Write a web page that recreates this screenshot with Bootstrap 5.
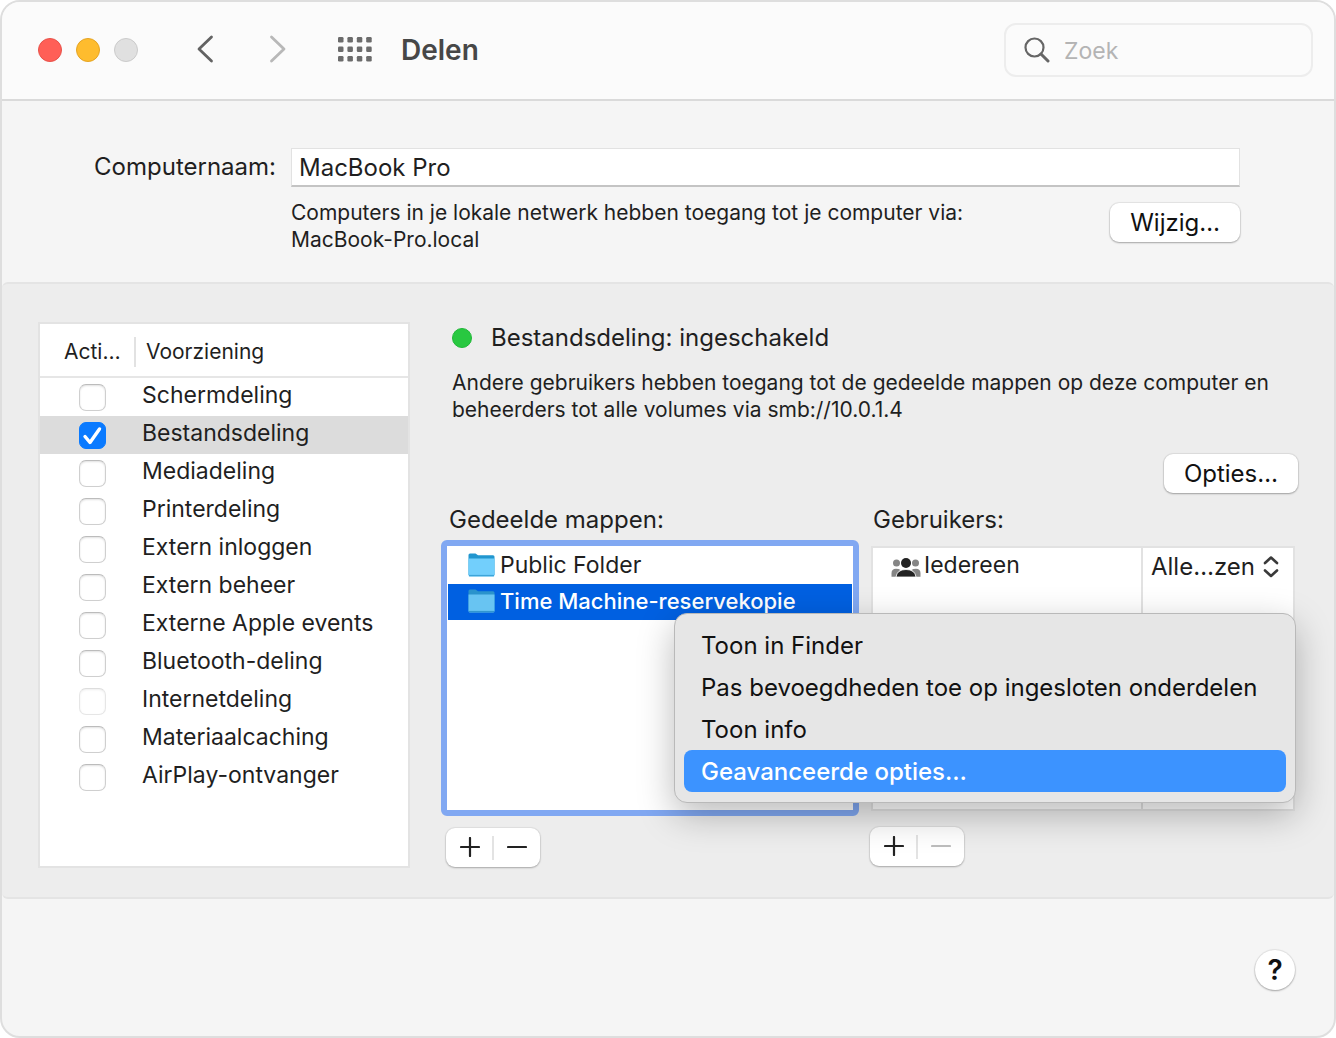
<!DOCTYPE html>
<html lang="nl">
<head>
<meta charset="utf-8">
<meta name="viewport" content="width=device-width, initial-scale=1">
<title>Delen</title>
<link href="https://cdn.jsdelivr.net/npm/bootstrap@5.3.0/dist/css/bootstrap.min.css" rel="stylesheet">
<style>
  body { font-family: Inter, "Liberation Sans", sans-serif; font-size: 24px; line-height: 30px; color: #1f1f1f; background: #fff; }
  svg { display: block; flex: none; }
  .window { min-height: 100vh; border: 2px solid #dedede; border-radius: 20px; background: #f5f5f5; overflow: hidden; }

  .titlebar { background: #fbfbfb; border-bottom: 2px solid #dadada; padding: 21px 21px 22px 36px; }
  .lights { gap: 14px; }
  .light { width: 24px; height: 24px; border-radius: 50%; border: 1px solid; padding: 0; }
  .light-close { background: #ff5f57; border-color: #e8524a; }
  .light-min { background: #febc2e; border-color: #e5a423; }
  .light-max { background: #e0e0e0; border-color: #cbcbcb; }
  .tool { border: 0; background: none; padding: 0; }
  .title { font-size: 28px; line-height: 36px; font-weight: 600; color: #474747; margin: 0 0 0 29px; }
  .search { width: 309px; height: 54px; border: 2px solid #ededed; border-radius: 12px; padding: 0 18px; background: #fbfbfb; gap: 14px; }
  .search input { border: 0; background: none; min-width: 0; outline: 0; padding: 2px 0 0; font-size: 23px; }
  .search input::placeholder { color: #b4b4b4; opacity: 1; }

  .name-section { padding: 47px 94px 29px 0; }
  .name-label { width: 274px; flex: none; text-align: right; padding-top: 4px; }
  .name-input { width: 100%; height: 39px; border: 1px solid #e2e2e2; border-bottom: 2px solid #c4c4c4; background: #fff; padding: 0 7px; color: inherit; }
  .name-field { margin-left: 15px; }
  .note { font-size: 21px; line-height: 27px; margin: 0; }
  .push { border: 0; border-radius: 9px; background: #fff; height: 39px; padding: 0 20px; color: #111; line-height: 36px; box-shadow: 0 0 1px 1px rgba(0,0,0,.07), 0 1px 2px rgba(0,0,0,.28); }

  .share-section { background: #ededed; border: solid #e4e4e4; border-width: 2px 0; border-radius: 6px; padding: 38px 36px 29px; }
  .services { width: 372px; height: 546px; flex: none; border: 2px solid #e3e3e3; background: #fff; }
  .services table { width: 100%; border-collapse: separate; border-spacing: 0; font-size: 23px; }
  .services th { height: 54px; font-weight: 400; font-size: 21px; padding: 4px 0 0; border-bottom: 2px solid #e6e6e6; }
  .services th span { display: block; line-height: 30px; }
  .col-on { width: 96px; }
  .col-on span { padding-left: 24px; border-right: 2px solid #e2e2e2; }
  .services th + th span { padding-left: 10px; }
  .services td { height: 38px; padding: 0; line-height: 35px; vertical-align: top; }
  .services td:last-child { padding-left: 6px; }
  .services td label { display: block; }
  .services .picked td { background: #dcdcdc; }
  .services .form-check-input { display: block; width: 27px; height: 27px; margin: 6px 0 0 39px; border: 1px solid #cfcfcf; border-top-color: #bcbcbc; border-radius: 7px; background-color: #fff; box-shadow: inset 0 1px 2px rgba(0,0,0,.12); }
  .services .form-check-input:checked { background-color: #0a7aff; border-color: #0a7aff; box-shadow: none; background-size: 27px 27px; background-image: url("data:image/svg+xml,%3Csvg xmlns='http://www.w3.org/2000/svg' viewBox='0 0 27 27'%3E%3Cpath d='M6 14.500l5 6L20.500 7' fill='none' stroke='white' stroke-width='3.4' stroke-linecap='round' stroke-linejoin='round'/%3E%3C/svg%3E"); }
  .services .form-check-input:disabled { opacity: .5; }

  .detail { padding: 1px 0 0 31px; min-width: 0; }
  .status { padding-left: 11px; gap: 19px; }
  .dot { width: 20px; height: 20px; border-radius: 50%; background: #28c840; border: 1px solid #20b838; }
  .detail .note { padding: 16px 0 0 11px; }
  .options { margin-top: 31px; }
  .lists { gap: 11px; margin-top: 12px; }
  .folders { flex: 418 1 0; min-width: 0; }
  .users { flex: 428 1 0; min-width: 0; }
  .pane-label { padding: 0 0 5px 8px; }
  .users .pane-label { padding-left: 3px; }
  .ring { border: 6px solid #81a8f2; border-radius: 6px; height: 276px; background: #fff; padding-top: 2px; }
  .users .listbox { border: 2px solid #e2e2e2; height: 265px; margin: 6px 3px 16px 1px; background: #fff; }
  .folder { height: 36px; padding: 0 0 2px 20px; gap: 5px; margin: 0 1px; font-size: 23px; }
  .folder.picked { background: #0060e1; color: #fff; font-size: 22px; font-weight: 500; }
  .who { width: 270px; border-right: 2px solid #e2e2e2; padding: 2px 0 0 18px; gap: 3px; font-size: 23px; }
  .rights { padding: 4px 0 0 8px; }
  .rights select { appearance: none; border: 0; background: none; padding: 0 16px 0 0; color: inherit; line-height: 30px; width: 128px; }
  .rights svg { margin-left: -16px; pointer-events: none; }
  .pair { display: flex; width: 94px; height: 39px; border-radius: 9px; background: #fff; margin: 12px 0 0 5px; box-shadow: 0 0 1px 1px rgba(0,0,0,.06), 0 1px 2px rgba(0,0,0,.25); }
  .users .pair { margin-left: 0; }
  .pair button { width: 47px; border: 0; background: none; padding: 0 0 2px; display: grid; place-items: center; }
  .pair i { width: 2px; height: 24px; margin: 8px -1px; background: #e3e3e3; }

  .ctx { right: 2px; bottom: 64px; width: 622px; padding: 10px 9px; border: 1px solid #b9b9b9; border-radius: 13px; background: #e6e6e6; box-shadow: 0 12px 36px rgba(0,0,0,.27); margin: 0; }
  .ctx button { display: block; width: 100%; height: 42px; border: 0; border-radius: 8px; background: none; text-align: left; padding: 2px 17px 0; color: #111; white-space: nowrap; }
  .ctx button.hot { background: #3c93ff; color: #fff; font-weight: 500; }

  .foot { padding: 51px 39px 45px; }
  .help { width: 40px; height: 40px; border-radius: 50%; border: 0; background: #fff; font-size: 28px; font-weight: 600; color: #111; padding: 0; line-height: 40px; box-shadow: 0 0 1px 1px rgba(0,0,0,.07), 0 1px 2px rgba(0,0,0,.28); }
</style>
<script src="https://cdn.jsdelivr.net/npm/bootstrap@5.3.0/dist/js/bootstrap.bundle.min.js"></script>
</head>
<body>
<div class="window">
  <header class="titlebar d-flex align-items-center">
    <div class="lights d-flex">
      <button class="light light-close" aria-label="Sluit"></button>
      <button class="light light-min" aria-label="Minimaliseer"></button>
      <button class="light light-max" aria-label="Vergroot" disabled></button>
    </div>
    <button class="tool ms-5 ps-2" aria-label="Vorige"><svg width="24" height="30" viewBox="0 0 24 30"><path d="M17.500 2 5 14 17.500 26" fill="none" stroke="#636363" stroke-width="2.800" stroke-linecap="round" stroke-linejoin="round"/></svg></button>
    <button class="tool ms-5" aria-label="Volgende" disabled><svg width="24" height="30" viewBox="0 0 24 30"><path d="M5.500 2 18 14 5.500 26" fill="none" stroke="#b8b8b8" stroke-width="2.800" stroke-linecap="round" stroke-linejoin="round"/></svg></button>
    <button class="tool ms-5" aria-label="Toon alles"><svg width="34" height="26" viewBox="0 0 34 26" fill="#6b6b6b"><g id="dots"><rect x="0" y="0" width="5.500" height="5.500" rx="1.300"/><rect x="9.400" y="0" width="5.500" height="5.500" rx="1.300"/><rect x="18.800" y="0" width="5.500" height="5.500" rx="1.300"/><rect x="28.200" y="0" width="5.500" height="5.500" rx="1.300"/></g><use href="#dots" y="9.500"/><use href="#dots" y="19"/></svg></button>
    <h1 class="title">Delen</h1>
    <label class="search d-flex align-items-center ms-auto">
      <svg width="26" height="26" viewBox="0 0 26 26" fill="none" stroke="#666" stroke-linecap="round"><circle cx="10.500" cy="10.500" r="9" stroke-width="2.200"/><path d="M17 17l7 7" stroke-width="3"/></svg>
      <input class="flex-grow-1" type="search" placeholder="Zoek" aria-label="Zoek">
    </label>
  </header>

  <section class="name-section d-flex">
    <label class="name-label" for="cname">Computernaam:</label>
    <div class="name-field flex-grow-1">
      <input class="name-input" id="cname" type="text" value="MacBook Pro">
      <div class="d-flex justify-content-between">
        <p class="note mt-2 pt-1">Computers in je lokale netwerk hebben toegang tot je computer via:<br>MacBook-Pro.local</p>
        <button class="push mt-3">Wijzig…</button>
      </div>
    </div>
  </section>

  <section class="share-section d-flex">
    <div class="services">
      <table>
        <thead><tr><th class="col-on"><span>Acti…</span></th><th><span>Voorziening</span></th></tr></thead>
        <tbody>
          <tr><td><input class="form-check-input" type="checkbox" id="s1"></td><td><label for="s1">Schermdeling</label></td></tr>
          <tr class="picked"><td><input class="form-check-input" type="checkbox" id="s2" checked></td><td><label for="s2">Bestandsdeling</label></td></tr>
          <tr><td><input class="form-check-input" type="checkbox" id="s3"></td><td><label for="s3">Mediadeling</label></td></tr>
          <tr><td><input class="form-check-input" type="checkbox" id="s4"></td><td><label for="s4">Printerdeling</label></td></tr>
          <tr><td><input class="form-check-input" type="checkbox" id="s5"></td><td><label for="s5">Extern inloggen</label></td></tr>
          <tr><td><input class="form-check-input" type="checkbox" id="s6"></td><td><label for="s6">Extern beheer</label></td></tr>
          <tr><td><input class="form-check-input" type="checkbox" id="s7"></td><td><label for="s7">Externe Apple events</label></td></tr>
          <tr><td><input class="form-check-input" type="checkbox" id="s8"></td><td><label for="s8">Bluetooth-deling</label></td></tr>
          <tr><td><input class="form-check-input" type="checkbox" id="s9" disabled></td><td><label for="s9">Internetdeling</label></td></tr>
          <tr><td><input class="form-check-input" type="checkbox" id="s10"></td><td><label for="s10">Materiaalcaching</label></td></tr>
          <tr><td><input class="form-check-input" type="checkbox" id="s11"></td><td><label for="s11">AirPlay-ontvanger</label></td></tr>
        </tbody>
      </table>
    </div>

    <div class="detail flex-grow-1">
      <div class="status d-flex align-items-center"><span class="dot"></span><span>Bestandsdeling: ingeschakeld</span></div>
      <p class="note">Andere gebruikers hebben toegang tot de gedeelde mappen op deze computer en<br>beheerders tot alle volumes via smb://10.0.1.4</p>
      <div class="options text-end"><button class="push">Opties…</button></div>

      <div class="lists d-flex position-relative">
        <div class="folders">
          <div class="pane-label">Gedeelde mappen:</div>
          <div class="ring">
            <div class="folder d-flex align-items-center">
              <svg width="27" height="25" viewBox="0 0 27 25"><path d="M.500 2Q.500.500 2 .500H7.500l2.500 1.800H25q1.500 0 1.500 1.500V22H.500z" fill="#2196cf"/><path d="M.500 5.500H26.500V22q0 1.500-1.500 1.500H2Q.500 23.500.500 22z" fill="#72cffc"/><path d="M1 22.600h25" stroke="#3da5d9" stroke-width="1.400"/></svg>
              <span>Public Folder</span>
            </div>
            <div class="folder picked d-flex align-items-center">
              <svg width="27" height="25" viewBox="0 0 27 25"><path d="M.500 2Q.500.500 2 .500H7.500l2.500 1.800H25q1.500 0 1.500 1.500V22H.500z" fill="#2a93cc"/><path d="M.500 5.500H26.500V22q0 1.500-1.500 1.500H2Q.500 23.500.500 22z" fill="#68c4f2"/><path d="M1 22.600h25" stroke="#3196d0" stroke-width="1.400"/></svg>
              <span>Time Machine-reservekopie</span>
            </div>
          </div>
          <div class="pair">
            <button aria-label="Voeg map toe"><svg width="20" height="20" viewBox="0 0 20 20"><path d="M10 1v18M1 10h18" stroke="#222" stroke-width="2.200" stroke-linecap="round"/></svg></button><i></i>
            <button aria-label="Verwijder map"><svg width="20" height="20" viewBox="0 0 20 20"><path d="M1 10h18" stroke="#222" stroke-width="2.200" stroke-linecap="round"/></svg></button>
          </div>
        </div>
        <div class="users">
          <div class="pane-label">Gebruikers:</div>
          <div class="listbox d-flex">
            <div class="who d-flex align-items-start">
              <svg class="mt-2" width="30" height="22" viewBox="0 0 30 22"><g fill="#858585"><circle cx="5.500" cy="5" r="3.500"/><circle cx="24.500" cy="5" r="3.500"/><path d="M.500 18.800v-3.500Q.500 10.800 5 10.800q3 0 4.500 1.200-3.500 2-4.500 6.800zM29.500 18.800v-3.500q0-4.500-4.500-4.500-3 0-4.500 1.200 3.500 2 4.500 6.800z"/></g><circle cx="15" cy="5" r="5" fill="#222"/><path d="M5 19q1-7.500 10-7.500t10 7.500z" fill="#222" stroke="#fff" stroke-width=".8"/></svg>
              <span>Iedereen</span>
            </div>
            <div class="rights d-flex align-items-start">
              <select aria-label="Bevoegdheid"><option>Alle…zen</option></select>
              <svg class="mt-1" width="16" height="22" viewBox="0 0 16 22"><path d="M2 7 8 1.500l6 5.500M2 14.500l6 5.500 6-5.500" fill="none" stroke="#3a3a3a" stroke-width="2.600" stroke-linecap="round" stroke-linejoin="round"/></svg>
            </div>
          </div>
          <div class="pair">
            <button aria-label="Voeg gebruiker toe"><svg width="20" height="20" viewBox="0 0 20 20"><path d="M10 1v18M1 10h18" stroke="#222" stroke-width="2.200" stroke-linecap="round"/></svg></button><i></i>
            <button aria-label="Verwijder gebruiker" disabled><svg width="20" height="20" viewBox="0 0 20 20"><path d="M1 10h18" stroke="#bdbdbd" stroke-width="2.200" stroke-linecap="round"/></svg></button>
          </div>
        </div>
        <div class="ctx position-absolute">
          <button>Toon in Finder</button>
          <button>Pas bevoegdheden toe op ingesloten onderdelen</button>
          <button>Toon info</button>
          <button class="hot">Geavanceerde opties…</button>
        </div>
      </div>
    </div>
  </section>

  <footer class="foot d-flex justify-content-end"><button class="help" aria-label="Help">?</button></footer>
</div>
</body>
</html>
